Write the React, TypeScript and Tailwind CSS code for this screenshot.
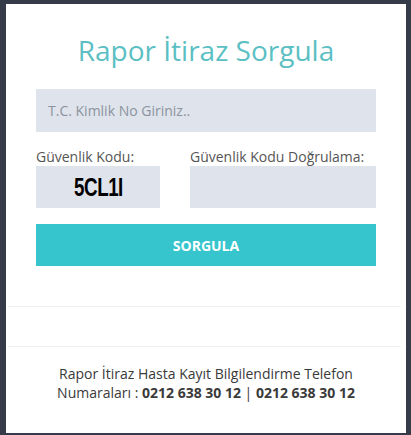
export default function App() {
  return (
    <div className="w-[411px] h-[435px] bg-[#353b48] pl-[6px] pt-[4px] pr-[5px] pb-[2px] font-['Open_Sans',sans-serif]">
      <div className="w-full h-full bg-white flex flex-col">
        <div className="px-[30px] pt-[28px]">
          <h1 className="text-center text-[28px] leading-[36px] text-[#5bbfc3]">Rapor İtiraz Sorgula</h1>

          <input
            type="text"
            placeholder="T.C. Kimlik No Giriniz.."
            className="mt-[21px] block w-full h-[43px] bg-[#dfe3eb] px-3 text-[14px] text-[#555] placeholder:text-[#8b93a0] outline-none"
          />

          <div className="mt-[17px] flex gap-[30px]">
            <div className="w-[124px]">
              <label className="block text-[14px] leading-4 text-[#555]">Güvenlik Kodu:</label>
              <div className="mt-px h-[42px] bg-[#dfe3eb] flex items-center justify-center">
                <span className="font-['Liberation_Sans',sans-serif] font-bold text-[25px] leading-none text-black scale-x-[0.75] tracking-tight">
                  5CL1I
                </span>
              </div>
            </div>
            <div className="flex-1">
              <label className="block text-[14px] leading-4 text-[#555]">Güvenlik Kodu Doğrulama:</label>
              <input type="text" className="mt-px block w-full h-[42px] bg-[#dfe3eb] px-3 outline-none" />
            </div>
          </div>

          <button className="mt-4 w-full h-[42px] bg-[#36c5cc] text-white text-[14px] font-bold">SORGULA</button>
        </div>

        <div className="mt-[40px] ml-[2px] mr-[5px] border-t border-[#efefef]" />
        <div className="mt-[39px] ml-[2px] mr-[5px] border-t border-[#efefef]" />

        <p className="mt-[17px] text-center text-[14px] leading-[19px] text-[#3a3a3a]">
          Rapor İtiraz Hasta Kayıt Bilgilendirme Telefon
          <br />
          Numaraları : <b>0212 638 30 12</b> | <b>0212 638 30 12</b>
        </p>
      </div>
    </div>
  );
}
